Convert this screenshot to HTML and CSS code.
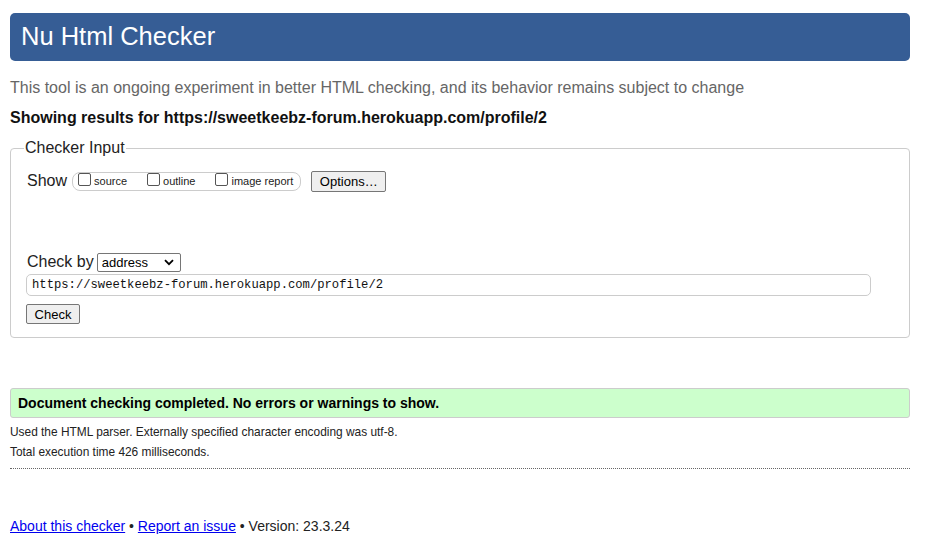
FILE: index.html
```html
<!DOCTYPE html>
<html>
<head>
<meta charset="utf-8">
<title>Nu Html Checker</title>
<link rel="stylesheet" href="styles.css">
</head>
<body>
<div class="page">
  <h1 class="title">Nu Html Checker</h1>
  <p class="intro">This tool is an ongoing experiment in better HTML checking, and its behavior remains subject to change</p>
  <p class="showing">Showing results for https://sweetkeebz-forum.herokuapp.com/profile/2</p>

  <fieldset class="input-box">
    <legend class="legend">Checker Input</legend>
    <div class="show-row">
      <span class="row-label">Show</span>
      <div class="show-opts">
        <label class="opt"><span class="cb"></span>source</label>
        <label class="opt"><span class="cb"></span>outline</label>
        <label class="opt"><span class="cb"></span>image report</label>
      </div>
      <span class="btn btn-options">Options…</span>
    </div>
    <div class="checkby-row">
      <span class="row-label">Check by</span>
      <span class="select">address<svg class="chev" width="10" height="7" viewBox="0 0 10 7"><path d="M1 1.2 L5 5.2 L9 1.2" fill="none" stroke="#000" stroke-width="1.8"/></svg></span>
    </div>
    <div class="url">https://sweetkeebz-forum.herokuapp.com/profile/2</div>
    <span class="btn btn-check">Check</span>
  </fieldset>

  <div class="success">Document checking completed. No errors or warnings to show.</div>
  <div class="details">
    <p class="meta">Used the HTML parser. Externally specified character encoding was utf-8.</p>
    <p class="meta">Total execution time 426 milliseconds.</p>
  </div>
  <div class="rule"></div>

  <p class="footer"><a href="#">About this checker</a> • <a href="#">Report an issue</a> • Version: 23.3.24</p>
</div>
</body>
</html>
```

FILE: styles.css
```css
html, body {
  margin: 0;
  padding: 0;
  background: #fff;
}
body {
  font-family: "Liberation Sans", Arial, sans-serif;
  color: #000;
}
.page {
  width: 900px;
  margin-left: 10px;
  padding-top: 13px;
}
.title {
  margin: 0;
  height: 48px;
  line-height: 47px;
  padding: 0 11px;
  background: #365d95;
  color: #fff;
  font-size: 25.5px;
  font-weight: normal;
  border-radius: 5px;
}
.intro {
  margin: 17px 0 0;
  font-size: 16px;
  line-height: 20px;
  color: #666;
}
.showing {
  margin: 10px 0 0;
  font-size: 16px;
  line-height: 20px;
  font-weight: bold;
  color: #111;
}
.input-box {
  margin: 10px 0 0;
  padding: 12px 15px 13px 15px;
  border: 1px solid #ccc;
  border-radius: 4px;
  min-width: 0;
}
.legend {
  padding: 0 1px;
  margin-left: -2px;
  font-size: 16px;
  line-height: 20px;
  color: #222;
}
.show-row {
  display: flex;
  align-items: center;
  height: 22px;
  padding-left: 1px;
}
.row-label {
  font-size: 16px;
  line-height: 20px;
  color: #222;
}
.show-opts {
  display: flex;
  align-items: center;
  margin-left: 5px;
  height: 17px;
  padding: 0 7px 0 5px;
  border: 1px solid #ccc;
  border-radius: 8px;
  gap: 20px;
}
.opt {
  display: flex;
  align-items: center;
  font-size: 11px;
  color: #222;
}
.cb {
  display: inline-block;
  width: 11px;
  height: 11px;
  border: 1px solid #555;
  border-radius: 2px;
  margin-right: 3px;
  margin-top: -3px;
  background: #fff;
}
.btn {
  display: inline-flex;
  align-items: center;
  justify-content: center;
  box-sizing: border-box;
  font-size: 13px;
  color: #000;
  background: #efefef;
  border: 1px solid #767676;
  border-radius: 2px;
}
.btn-options {
  margin-left: 10px;
  width: 75px;
  height: 21px;
}
.checkby-row {
  display: flex;
  align-items: center;
  margin-top: 59px;
  height: 22px;
  padding-left: 1px;
}
.select {
  display: inline-flex;
  align-items: center;
  justify-content: space-between;
  box-sizing: border-box;
  margin-left: 3px;
  width: 84px;
  height: 19px;
  padding: 0 6px 0 4px;
  border: 1px solid #767676;
  border-radius: 2px;
  font-size: 13px;
  color: #000;
}
.url {
  box-sizing: border-box;
  margin-top: 1px;
  width: 845px;
  height: 22px;
  line-height: 20px;
  padding: 0 5px;
  border: 1px solid #ccc;
  border-radius: 5px;
  font-family: "Liberation Mono", "DejaVu Sans Mono", monospace;
  font-size: 12.2px;
  color: #111;
}
.btn-check {
  margin-top: 8px;
  width: 54px;
  height: 20px;
}
.success {
  margin-top: 50px;
  box-sizing: border-box;
  height: 30px;
  line-height: 28px;
  padding: 0 7px;
  background: #ccffcc;
  border: 1px solid #ccc;
  border-radius: 3px;
  font-size: 14px;
  font-weight: bold;
  color: #000;
}
.details {
  display: flex;
  flex-direction: column;
  gap: 4px;
  margin-top: 6px;
}
.meta {
  margin: 0;
  font-size: 11.9px;
  line-height: 16px;
  color: #222;
}
.rule {
  margin-top: 8px;
  border-top: 1px dotted #666;
}
.footer {
  margin: 48px 0 0;
  font-size: 14px;
  line-height: 18px;
  color: #222;
}
.footer a {
  color: #00e;
}
```
